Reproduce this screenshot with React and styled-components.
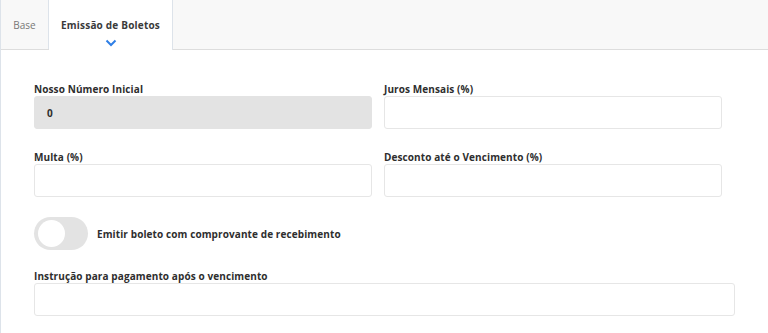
import React from 'react';
import styled, { createGlobalStyle } from 'styled-components';

const GlobalStyle = createGlobalStyle`
  body {
    margin: 0;
    background: #ffffff;
    font-family: "Open Sans", "Liberation Sans", sans-serif;
    color: #333333;
  }
`;

const Page = styled.div`
  width: 768px;
  height: 333px;
  box-sizing: border-box;
  border-left: 1px solid #dde3ea;
  overflow: hidden;
`;

const TabBar = styled.div`
  display: flex;
  height: 50px;
  box-sizing: border-box;
  background: #f8f8f8;
  border-bottom: 1px solid #dddddd;
`;

const Tab = styled.div`
  position: relative;
  display: flex;
  align-items: center;
  justify-content: center;
  box-sizing: border-box;
  flex-shrink: 0;
  white-space: nowrap;
  height: ${props => (props.active ? '50px' : '49px')};
  width: ${props => props.width}px;
  padding-bottom: 0;
  background: ${props => (props.active ? '#ffffff' : '#f8f8f8')};
  border-right: 1px solid #dde3ea;
  font-size: 10px;
  font-weight: ${props => (props.active ? 700 : 400)};
  letter-spacing: ${props => (props.active ? '0.2px' : '0')};
  color: ${props => (props.active ? '#3a3a3a' : '#777777')};
`;

const Chevron = styled.svg`
  position: absolute;
  left: 50%;
  bottom: 3px;
  margin-left: -6px;
`;

const Form = styled.div`
  padding: 33px 0 0 33px;
`;

const Grid = styled.div`
  display: grid;
  grid-template-columns: 338px 338px;
  column-gap: 12px;
  row-gap: 22px;
`;

const Field = styled.div`
  display: flex;
  flex-direction: column;
  width: ${props => (props.wide ? '701px' : 'auto')};
`;

const Label = styled.label`
  font-size: 10px;
  font-weight: 700;
  line-height: 13px;
  color: #2e2e2e;
  letter-spacing: 0.1px;
`;

const Input = styled.div`
  height: 33px;
  box-sizing: border-box;
  border: 1px solid ${props => (props.disabled ? '#e3e3e3' : '#e6e6e6')};
  border-radius: 3px;
  background: ${props => (props.disabled ? '#e3e3e3' : '#ffffff')};
  display: flex;
  align-items: center;
  padding-left: 12px;
  font-size: 10px;
  font-weight: 700;
  color: #2e2e2e;
`;

const ToggleRow = styled.div`
  display: flex;
  align-items: center;
  gap: 9px;
  margin: 20px 0 20px;
`;

const Switch = styled.div`
  width: 54px;
  height: 33px;
  border-radius: 17px;
  background: #e3e3e3;
  padding: 3px 4px;
  box-sizing: border-box;
  display: flex;
  align-items: center;
`;

const Knob = styled.div`
  width: 27px;
  height: 27px;
  border-radius: 50%;
  background: #ffffff;
`;

const ToggleText = styled.span`
  font-size: 10px;
  font-weight: 700;
  color: #2e2e2e;
  letter-spacing: 0.1px;
`;

export default function App() {
  return (
    <>
      <GlobalStyle />
      <Page>
        <TabBar>
          <Tab width={48}>Base</Tab>
          <Tab active width={124}>
            Emissão de Boletos
            <Chevron width="12" height="8" viewBox="0 0 12 8">
              <path d="M1.5 1.5 L6 6 L10.5 1.5" fill="none" stroke="#2f7fe6" strokeWidth="2" />
            </Chevron>
          </Tab>
        </TabBar>
        <Form>
          <Grid>
            <Field>
              <Label>Nosso Número Inicial</Label>
              <Input disabled>0</Input>
            </Field>
            <Field>
              <Label>Juros Mensais (%)</Label>
              <Input />
            </Field>
            <Field>
              <Label>Multa (%)</Label>
              <Input />
            </Field>
            <Field>
              <Label>Desconto até o Vencimento (%)</Label>
              <Input />
            </Field>
          </Grid>
          <ToggleRow>
            <Switch>
              <Knob />
            </Switch>
            <ToggleText>Emitir boleto com comprovante de recebimento</ToggleText>
          </ToggleRow>
          <Field wide>
            <Label>Instrução para pagamento após o vencimento</Label>
            <Input />
          </Field>
        </Form>
      </Page>
    </>
  );
}
